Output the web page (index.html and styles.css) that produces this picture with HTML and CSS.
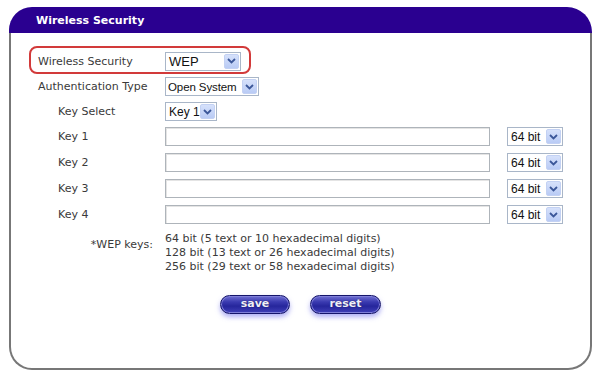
FILE: index.html
```html
<!DOCTYPE html>
<html>
<head>
<meta charset="utf-8">
<link rel="stylesheet" href="styles.css">
</head>
<body>
<div class="panel">
  <div class="hdr">Wireless Security</div>
  <div class="body">
    <div class="form">
      <div class="row hl">
        <span class="lbl">Wireless Security</span>
        <span class="sel s-wep"><span class="val">WEP</span><span class="arr"><svg width="9" height="6" viewBox="0 0 9 6"><path d="M1 1 L4.5 4.5 L8 1" stroke="#3b5799" stroke-width="1.8" fill="none"/></svg></span></span>
      </div>
      <div class="row r-auth">
        <span class="lbl">Authentication Type</span>
        <span class="sel s-open"><span class="val">Open System</span><span class="arr"><svg width="9" height="6" viewBox="0 0 9 6"><path d="M1 1 L4.5 4.5 L8 1" stroke="#3b5799" stroke-width="1.8" fill="none"/></svg></span></span>
      </div>
      <div class="row r-ks">
        <span class="lbl ind">Key Select</span>
        <span class="sel s-key"><span class="val">Key 1</span><span class="arr"><svg width="9" height="6" viewBox="0 0 9 6"><path d="M1 1 L4.5 4.5 L8 1" stroke="#3b5799" stroke-width="1.8" fill="none"/></svg></span></span>
      </div>
      <div class="row r-k1">
        <span class="lbl ind">Key 1</span>
        <span class="inp"></span>
        <span class="sel s-bit"><span class="val">64 bit</span><span class="arr"><svg width="9" height="6" viewBox="0 0 9 6"><path d="M1 1 L4.5 4.5 L8 1" stroke="#3b5799" stroke-width="1.8" fill="none"/></svg></span></span>
      </div>
      <div class="row r-k">
        <span class="lbl ind">Key 2</span>
        <span class="inp"></span>
        <span class="sel s-bit"><span class="val">64 bit</span><span class="arr"><svg width="9" height="6" viewBox="0 0 9 6"><path d="M1 1 L4.5 4.5 L8 1" stroke="#3b5799" stroke-width="1.8" fill="none"/></svg></span></span>
      </div>
      <div class="row r-k">
        <span class="lbl ind">Key 3</span>
        <span class="inp"></span>
        <span class="sel s-bit"><span class="val">64 bit</span><span class="arr"><svg width="9" height="6" viewBox="0 0 9 6"><path d="M1 1 L4.5 4.5 L8 1" stroke="#3b5799" stroke-width="1.8" fill="none"/></svg></span></span>
      </div>
      <div class="row r-k">
        <span class="lbl ind">Key 4</span>
        <span class="inp"></span>
        <span class="sel s-bit"><span class="val">64 bit</span><span class="arr"><svg width="9" height="6" viewBox="0 0 9 6"><path d="M1 1 L4.5 4.5 L8 1" stroke="#3b5799" stroke-width="1.8" fill="none"/></svg></span></span>
      </div>
      <div class="notes">
        <span class="nlbl">*WEP keys:</span>
        <div class="ntext">
          <div>64 bit (5 text or 10 hexadecimal digits)</div>
          <div>128 bit (13 text or 26 hexadecimal digits)</div>
          <div>256 bit (29 text or 58 hexadecimal digits)</div>
        </div>
      </div>
      <div class="btns">
        <span class="btn b-save">save</span>
        <span class="btn b-reset">reset</span>
      </div>
    </div>
  </div>
</div>
</body>
</html>
```

FILE: styles.css
```css
html, body {
  margin: 0;
  padding: 0;
  background: #ffffff;
}
body {
  font-family: "DejaVu Sans", Verdana, sans-serif;
  font-size: 11px;
  color: #3a3a3a;
}
.panel {
  margin: 7px 0 0 9px;
  width: 583px;
}
.hdr {
  height: 26px;
  box-sizing: border-box;
  padding: 1px 0 0 27px;
  line-height: 25px;
  background: #2a0090;
  border-radius: 23px 25px 0 0;
  color: #ffffff;
  font-weight: bold;
  font-size: 11px;
}
.body {
  height: 337px;
  box-sizing: border-box;
  border: 2px solid #777777;
  border-top: none;
  border-radius: 0 0 24px 23px;
}
.form {
  padding: 13px 0 0 18px;
}
.row {
  display: flex;
  align-items: center;
  height: 19px;
}
.lbl {
  width: 136px;
  box-sizing: border-box;
  padding-left: 9px;
  flex: none;
  white-space: nowrap;
}
.lbl.ind {
  padding-left: 29px;
}
.hl {
  width: 222px;
  height: 28px;
  box-sizing: border-box;
  border: 2px solid #d23a3a;
  border-radius: 8px;
  padding: 2px 0 0 7px;
}
.hl .lbl {
  width: 127px;
  padding-left: 0;
}
.r-auth { margin-top: 3px; }
.r-ks { margin-top: 6px; }
.r-k1 { margin-top: 6px; }
.r-k { margin-top: 7px; }

.sel {
  display: flex;
  align-items: center;
  height: 19px;
  box-sizing: border-box;
  border: 1px solid #a9b6c8;
  background: #ffffff;
  font-family: "Liberation Sans", Arial, sans-serif;
  font-size: 12px;
  color: #111111;
  flex: none;
}
.val {
  padding-left: 3px;
  white-space: nowrap;
}
.arr {
  margin-left: auto;
  margin-right: 1px;
  width: 15px;
  height: 15px;
  box-sizing: border-box;
  border: 1px solid #c3d1f3;
  border-radius: 2px;
  background: linear-gradient(#d6e1fb, #b9cbf5);
  display: flex;
  align-items: center;
  justify-content: center;
  flex: none;
}
.s-wep { width: 76px; }
.s-open { width: 94px; font-size: 11.5px; }
.s-open .val { padding-left: 2px; letter-spacing: -0.1px; }
.s-key { width: 52px; }
.s-bit { width: 56px; margin-left: 17px; }
.s-wep .val { font-size: 13px; }
.inp {
  width: 325px;
  height: 19px;
  box-sizing: border-box;
  border: 1px solid #aeb4ba;
  box-shadow: inset 1px 1px 0 #e4e4e4;
  background: #ffffff;
  flex: none;
}
.notes {
  display: flex;
  margin-top: 8px;
  line-height: 14px;
}
.nlbl {
  width: 136px;
  box-sizing: border-box;
  padding-right: 12px;
  text-align: right;
  margin-top: 6px;
  flex: none;
}
.btns {
  display: flex;
  justify-content: center;
  gap: 20px;
  margin: 21px 0 0 -18px;
}
.btn {
  width: 70px;
  height: 19px;
  box-sizing: border-box;
  border: 1px solid #15156a;
  border-radius: 10px;
  background: linear-gradient(#7070d2 0%, #3a3ab0 35%, #26269c 60%, #4040b8 100%);
  box-shadow: inset 0 0 0 1px #7f7fd8, 0 3px 5px rgba(110, 110, 235, 0.55);
  color: #eeeef8;
  font-weight: bold;
  font-size: 11px;
  line-height: 16px;
  text-align: center;
  text-shadow: 0 0 1px #101050;
}
.b-reset { width: 71px; }
```
